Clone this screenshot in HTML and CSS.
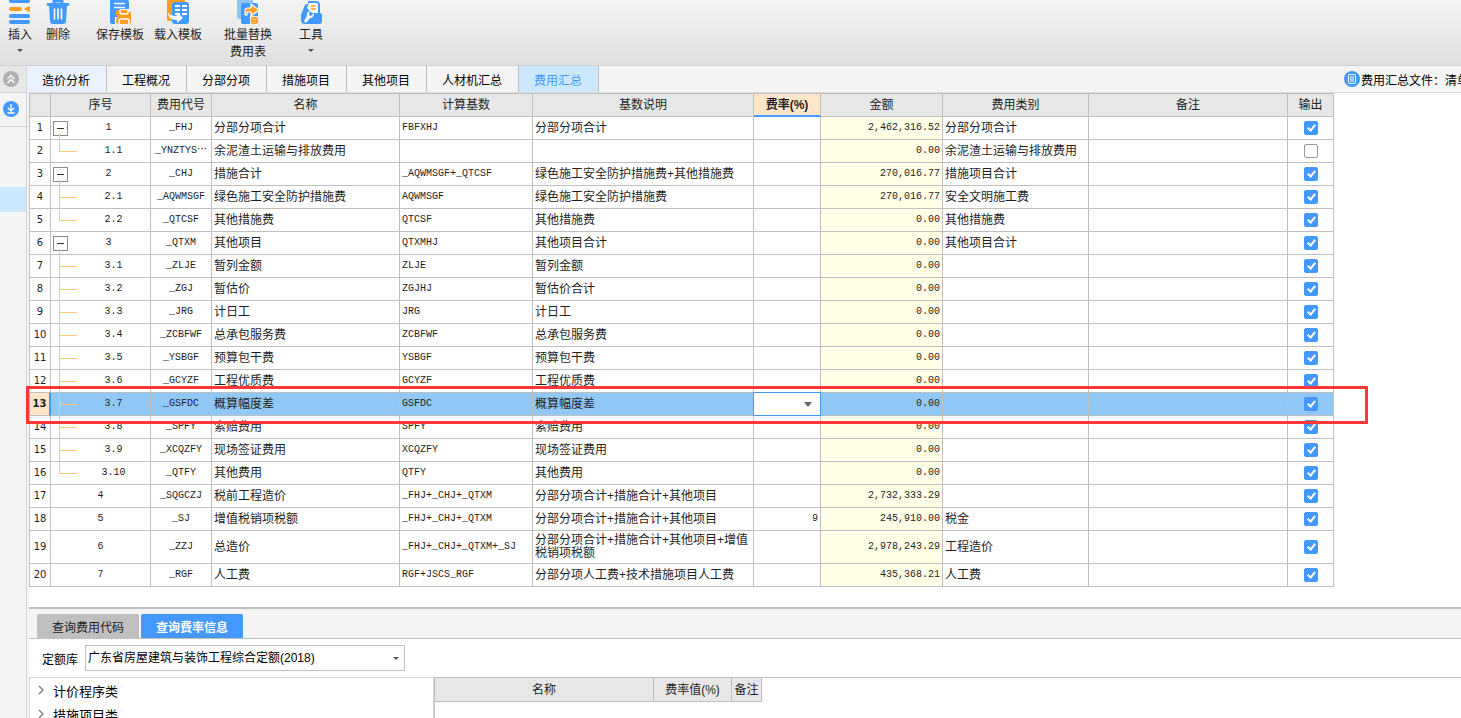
FILE: index.html
```html
<!DOCTYPE html>
<html lang="zh-CN">
<head>
<meta charset="utf-8">
<title>费用汇总</title>
<link rel="stylesheet" href="styles.css">
</head>
<body>
<div class="app">
  <header class="toolbar">
    <button class="tool tool-insert" type="button">
      <svg class="tool-icon" viewBox="0 0 24 24"><g fill="#4399ff"><rect x="1" y="-2" width="21" height="5" rx="2"/><rect x="1" y="14" width="21" height="4" rx="2"/><rect x="1" y="20" width="21" height="4" rx="2"/></g><rect x="1" y="7" width="13" height="4" rx="2" fill="#ff9d1e"/><path d="M16 9l5-3q1 0 1 1v4q0 1-1 1z" fill="#ff9d1e"/></svg>
      <span>插入</span><i class="caret"></i>
    </button>
    <button class="tool tool-delete" type="button">
      <svg class="tool-icon" viewBox="0 0 24 24"><path d="M2 4.500h20M8 4V1h8v3" fill="none" stroke="#4399ff" stroke-width="2.800" stroke-linecap="round"/><path d="M3 5h18l-1 16q0 3-3 3H7q-3 0-3-3z" fill="#4399ff"/><path d="M8.500 8.500v11M12 8.500v11M15.500 8.500v11" stroke="#fff" stroke-width="1.600"/></svg>
      <span>删除</span>
    </button>
    <button class="tool tool-save" type="button">
      <svg class="tool-icon" viewBox="0 0 24 24"><path d="M4-1h13q4 0 4 4v6h-8q-2 0-2 2v6H7v7H4q-2 0-2-2V1q0-2 2-2z" fill="#4399ff"/><path d="M6 3.500h11M6 7.500h11" stroke="#fff" stroke-width="1.500"/><path d="M7 18h3v6H7z" fill="#fff"/><path d="M10 10h10l3 3v9q0 2-2 2H10q-2 0-2-2v-3l2-2-2-2v-3q0-2 2-2z" fill="#ff9d1e"/><path d="M12 10v2q0 2 2 2h4q2 0 2-2v-2M11 24v-3q0-2 2-2h6q2 0 2 2v3" fill="none" stroke="#fff" stroke-width="1.500"/></svg>
      <span>保存模板</span>
    </button>
    <button class="tool tool-load" type="button">
      <svg class="tool-icon" viewBox="0 0 24 24"><rect x="1" y="-1" width="18" height="22" rx="2" fill="#ff9d1e"/><rect x="6" y="2" width="17" height="22" rx="3" fill="#4399ff"/><path d="M9 6h5M9 10h5M9 14h5M16 6h5M16 10h5M16 14h5" stroke="#fff" stroke-width="2"/><path d="M2 12q1 4 9 4v-4l6 6-6 5v-3Q2 20 2 12z" fill="#fff"/></svg>
      <span>载入模板</span>
    </button>
    <button class="tool tool-replace" type="button">
      <svg class="tool-icon" viewBox="0 0 24 24"><rect x="1" y="-1" width="16" height="20" rx="2" fill="#8fc4fc"/><path d="M7 3h13q2 0 2 2v17H15v2H7q-2 0-2-2V5q0-2 2-2z" fill="#4399ff"/><path d="M9 15V11q0-3 3-3h3V4l8 6-8 6v-4h-4v3z" fill="#ff9d1e" stroke="#fff" stroke-width="1.200"/><rect x="14" y="16" width="10" height="9" fill="#ececec"/><rect x="15" y="17" width="7" height="7" rx="2" fill="#ff9d1e"/><path d="M16.500 19.500h4M16.500 22h4" stroke="#ffd28f"/></svg>
      <span>批量替换</span><span>费用表</span>
    </button>
    <button class="tool tool-tools" type="button">
      <svg class="tool-icon" viewBox="0 0 24 24"><path d="M9 1h8q4 0 4 4v8q2 0 2 2v6q0 3-3 3H6q-4 0-4-4v-5l3-8q1-3 4-3z" fill="#4399ff"/><path d="M10 3h7q2 0 2 2v8h-6L8 8z" fill="#fff"/><path d="M12 6h5M12 9h5" stroke="#ff9d1e" stroke-width="1.500"/><path d="M5 21l3-5q-1-4 3-5l-1 4 2 1 3-3q0 5-4 5l-4 5z" fill="#fff"/></svg>
      <span>工具</span><i class="caret"></i>
    </button>
  </header>

  <div class="workspace">
    <aside class="sidebar">
      <button class="side-toggle" type="button" aria-label="收起"><svg viewBox="0 0 16 16"><circle cx="8" cy="8" r="8" fill="#b0b0b0"/><path d="M4.500 8L8 4.500 11.500 8M4.500 12L8 8.500l3.500 3.500" fill="none" stroke="#fff" stroke-width="1.300"/></svg></button>
      <button class="side-download" type="button" aria-label="下载"><svg viewBox="0 0 16 16"><circle cx="8" cy="8" r="8" fill="#4399ff"/><path d="M8 3v7M5 7l3 3 3-3M4.500 12h7" fill="none" stroke="#fff" stroke-width="1.300"/></svg></button>
      <div class="side-current"></div>
    </aside>

    <main class="content">
      <nav class="tabs">
        <button class="tab tab-hover" type="button">造价分析</button>
        <button class="tab" type="button">工程概况</button>
        <button class="tab" type="button">分部分项</button>
        <button class="tab" type="button">措施项目</button>
        <button class="tab" type="button">其他项目</button>
        <button class="tab" type="button">人材机汇总</button>
        <button class="tab tab-active" type="button">费用汇总</button>
        <div class="file-info"><svg viewBox="0 0 16 16"><circle cx="8" cy="8" r="8" fill="#4399ff"/><rect x="4.500" y="3.500" width="7" height="9" rx="1" fill="none" stroke="#fff"/><path d="M6 6h4M6 8h4M6 10h4" stroke="#fff"/></svg><span>费用汇总文件：清单</span></div>
      </nav>

      <section class="grid-area">
        <table class="grid">
          <colgroup><col class="c-row"><col class="c-seq"><col class="c-code"><col class="c-name"><col class="c-base"><col class="c-desc"><col class="c-rate"><col class="c-sum"><col class="c-kind"><col class="c-note"><col class="c-out"></colgroup>
          <thead><tr><th></th><th>序号</th><th>费用代号</th><th>名称</th><th>计算基数</th><th>基数说明</th><th class="th-current">费率(%)</th><th>金额</th><th>费用类别</th><th>备注</th><th>输出</th></tr></thead>
          <tbody>
            <tr><td class="num">1</td><td class="seq root">1</td><td class="code">_FHJ</td><td>分部分项合计</td><td class="mono">FBFXHJ</td><td>分部分项合计</td><td class="rate"></td><td class="sum">2,462,316.52</td><td>分部分项合计</td><td></td><td class="out"><input type="checkbox" aria-label="输出 1" checked></td></tr>
            <tr><td class="num">2</td><td class="seq leaf last">1.1</td><td class="code">_YNZTYS⋯</td><td>余泥渣土运输与排放费用</td><td class="mono"></td><td></td><td class="rate"></td><td class="sum">0.00</td><td>余泥渣土运输与排放费用</td><td></td><td class="out"><input type="checkbox" aria-label="输出 2"></td></tr>
            <tr><td class="num">3</td><td class="seq root">2</td><td class="code">_CHJ</td><td>措施合计</td><td class="mono">_AQWMSGF+_QTCSF</td><td>绿色施工安全防护措施费+其他措施费</td><td class="rate"></td><td class="sum">270,016.77</td><td>措施项目合计</td><td></td><td class="out"><input type="checkbox" aria-label="输出 3" checked></td></tr>
            <tr><td class="num">4</td><td class="seq leaf">2.1</td><td class="code">_AQWMSGF</td><td>绿色施工安全防护措施费</td><td class="mono">AQWMSGF</td><td>绿色施工安全防护措施费</td><td class="rate"></td><td class="sum">270,016.77</td><td>安全文明施工费</td><td></td><td class="out"><input type="checkbox" aria-label="输出 4" checked></td></tr>
            <tr><td class="num">5</td><td class="seq leaf last">2.2</td><td class="code">_QTCSF</td><td>其他措施费</td><td class="mono">QTCSF</td><td>其他措施费</td><td class="rate"></td><td class="sum">0.00</td><td>其他措施费</td><td></td><td class="out"><input type="checkbox" aria-label="输出 5" checked></td></tr>
            <tr><td class="num">6</td><td class="seq root">3</td><td class="code">_QTXM</td><td>其他项目</td><td class="mono">QTXMHJ</td><td>其他项目合计</td><td class="rate"></td><td class="sum">0.00</td><td>其他项目合计</td><td></td><td class="out"><input type="checkbox" aria-label="输出 6" checked></td></tr>
            <tr><td class="num">7</td><td class="seq leaf">3.1</td><td class="code">_ZLJE</td><td>暂列金额</td><td class="mono">ZLJE</td><td>暂列金额</td><td class="rate"></td><td class="sum">0.00</td><td></td><td></td><td class="out"><input type="checkbox" aria-label="输出 7" checked></td></tr>
            <tr><td class="num">8</td><td class="seq leaf">3.2</td><td class="code">_ZGJ</td><td>暂估价</td><td class="mono">ZGJHJ</td><td>暂估价合计</td><td class="rate"></td><td class="sum">0.00</td><td></td><td></td><td class="out"><input type="checkbox" aria-label="输出 8" checked></td></tr>
            <tr><td class="num">9</td><td class="seq leaf">3.3</td><td class="code">_JRG</td><td>计日工</td><td class="mono">JRG</td><td>计日工</td><td class="rate"></td><td class="sum">0.00</td><td></td><td></td><td class="out"><input type="checkbox" aria-label="输出 9" checked></td></tr>
            <tr><td class="num">10</td><td class="seq leaf">3.4</td><td class="code">_ZCBFWF</td><td>总承包服务费</td><td class="mono">ZCBFWF</td><td>总承包服务费</td><td class="rate"></td><td class="sum">0.00</td><td></td><td></td><td class="out"><input type="checkbox" aria-label="输出 10" checked></td></tr>
            <tr><td class="num">11</td><td class="seq leaf">3.5</td><td class="code">_YSBGF</td><td>预算包干费</td><td class="mono">YSBGF</td><td>预算包干费</td><td class="rate"></td><td class="sum">0.00</td><td></td><td></td><td class="out"><input type="checkbox" aria-label="输出 11" checked></td></tr>
            <tr><td class="num">12</td><td class="seq leaf">3.6</td><td class="code">_GCYZF</td><td>工程优质费</td><td class="mono">GCYZF</td><td>工程优质费</td><td class="rate"></td><td class="sum">0.00</td><td></td><td></td><td class="out"><input type="checkbox" aria-label="输出 12" checked></td></tr>
            <tr class="selected"><td class="num">13</td><td class="seq leaf">3.7</td><td class="code">_GSFDC</td><td>概算幅度差</td><td class="mono">GSFDC</td><td>概算幅度差</td><td class="rate editing"><select aria-label="费率"><option></option></select></td><td class="sum">0.00</td><td></td><td></td><td class="out"><input type="checkbox" aria-label="输出 13" checked></td></tr>
            <tr><td class="num">14</td><td class="seq leaf">3.8</td><td class="code">_SPFY</td><td>索赔费用</td><td class="mono">SPFY</td><td>索赔费用</td><td class="rate"></td><td class="sum">0.00</td><td></td><td></td><td class="out"><input type="checkbox" aria-label="输出 14" checked></td></tr>
            <tr><td class="num">15</td><td class="seq leaf">3.9</td><td class="code">_XCQZFY</td><td>现场签证费用</td><td class="mono">XCQZFY</td><td>现场签证费用</td><td class="rate"></td><td class="sum">0.00</td><td></td><td></td><td class="out"><input type="checkbox" aria-label="输出 15" checked></td></tr>
            <tr><td class="num">16</td><td class="seq leaf last">3.10</td><td class="code">_QTFY</td><td>其他费用</td><td class="mono">QTFY</td><td>其他费用</td><td class="rate"></td><td class="sum">0.00</td><td></td><td></td><td class="out"><input type="checkbox" aria-label="输出 16" checked></td></tr>
            <tr><td class="num">17</td><td class="seq">4</td><td class="code">_SQGCZJ</td><td>税前工程造价</td><td class="mono">_FHJ+_CHJ+_QTXM</td><td>分部分项合计+措施合计+其他项目</td><td class="rate"></td><td class="sum">2,732,333.29</td><td></td><td></td><td class="out"><input type="checkbox" aria-label="输出 17" checked></td></tr>
            <tr><td class="num">18</td><td class="seq">5</td><td class="code">_SJ</td><td>增值税销项税额</td><td class="mono">_FHJ+_CHJ+_QTXM</td><td>分部分项合计+措施合计+其他项目</td><td class="rate">9</td><td class="sum">245,910.00</td><td>税金</td><td></td><td class="out"><input type="checkbox" aria-label="输出 18" checked></td></tr>
            <tr class="tall"><td class="num">19</td><td class="seq">6</td><td class="code">_ZZJ</td><td>总造价</td><td class="mono">_FHJ+_CHJ+_QTXM+_SJ</td><td class="wrap">分部分项合计+措施合计+其他项目+增值税销项税额</td><td class="rate"></td><td class="sum">2,978,243.29</td><td>工程造价</td><td></td><td class="out"><input type="checkbox" aria-label="输出 19" checked></td></tr>
            <tr><td class="num">20</td><td class="seq">7</td><td class="code">_RGF</td><td>人工费</td><td class="mono">RGF+JSCS_RGF</td><td>分部分项人工费+技术措施项目人工费</td><td class="rate"></td><td class="sum">435,368.21</td><td>人工费</td><td></td><td class="out"><input type="checkbox" aria-label="输出 20" checked></td></tr>
          </tbody>
        </table>
        <div class="row-marker"></div>
      </section>

      <section class="query">
        <div class="query-tabs">
          <button class="query-tab" type="button">查询费用代码</button>
          <button class="query-tab query-tab-active" type="button">查询费率信息</button>
        </div>
        <div class="query-filter">
          <label for="library">定额库</label>
          <div class="library"><select id="library"><option>广东省房屋建筑与装饰工程综合定额(2018)</option></select></div>
        </div>
        <div class="query-body">
          <ul class="tree">
            <li><svg viewBox="0 0 6 10"><path d="M1 1l4 4-4 4" fill="none" stroke="#777" stroke-width="1.300"/></svg>计价程序类</li>
            <li><svg viewBox="0 0 6 10"><path d="M1 1l4 4-4 4" fill="none" stroke="#777" stroke-width="1.300"/></svg>措施项目类</li>
          </ul>
          <div class="rates">
            <table class="grid rates-grid">
              <colgroup><col class="r-name"><col class="r-value"><col class="r-note"></colgroup>
              <thead><tr><th>名称</th><th>费率值(%)</th><th>备注</th></tr></thead>
            </table>
          </div>
        </div>
      </section>
    </main>
  </div>
</div>
</body>
</html>
```
FILE: styles.css
```css
* { box-sizing: border-box; }

body {
  margin: 0;
  font-family: "Liberation Sans", "Noto Sans CJK SC", sans-serif;
  font-size: 12px;
  color: #1e1e1e;
}

button {
  margin: 0;
  padding: 0;
  border: 0;
  background: none;
  font: inherit;
  color: inherit;
  white-space: nowrap;
}

svg { display: block; flex: none; }

.app {
  display: flex;
  flex-direction: column;
  height: 100vh;
  overflow: hidden;
  background: #f4f4f4;
}

/* Toolbar */
.toolbar {
  display: flex;
  align-items: flex-start;
  flex: none;
  height: 66px;
  padding-left: 8px;
  border-bottom: 1px solid #d0d0d0;
  background: linear-gradient(#f4f4f4, #dfdfdf);
}

.tool {
  display: flex;
  flex-direction: column;
  align-items: center;
  line-height: 17px;
}

.tool-icon { width: 24px; height: 24px; margin-bottom: 3px; }
.tool-delete { margin-left: 14px; }
.tool-save { margin-left: 26px; }
.tool-load { margin-left: 10px; }
.tool-replace { margin-left: 22px; }
.tool-tools { margin-left: 27px; }

.caret {
  margin-top: 5px;
  border: 3px solid transparent;
  border-top-color: #555;
  border-bottom: 0;
}

/* Sidebar */
.workspace { display: flex; flex: 1; min-height: 0; }

.sidebar {
  flex: none;
  width: 27px;
  border-right: 1px solid #d4d4d4;
}

.sidebar svg { width: 16px; height: 16px; }

.side-toggle, .side-download {
  display: flex;
  align-items: center;
  width: 100%;
  padding-left: 3px;
  border-bottom: 1px solid #d4d4d4;
}

.side-toggle { height: 27px; background: #e7e7e7; }
.side-download { height: 34px; padding-bottom: 2px; }
.side-current { height: 25px; margin-top: 60px; background: #cce8ff; }

.content {
  display: flex;
  flex-direction: column;
  flex: 1;
  min-width: 0;
}

/* Tabs */
.tabs {
  display: flex;
  flex: none;
  height: 27px;
  border-bottom: 1px solid #dcdcdc;
}

.tab {
  padding: 0 16px 0 15px;
  border-right: 1px solid #bfbfbf;
  color: #000;
}

.tab-hover { background: #eaf2ff; }
.tab-active { background: #cce8ff; color: #4399ff; }

.file-info {
  display: flex;
  align-items: center;
  gap: 1px;
  width: 117px;
  margin-left: auto;
  white-space: nowrap;
  color: #000;
}

.file-info svg { width: 16px; height: 16px; }

/* Data grid */
.grid-area {
  position: relative;
  flex: none;
  margin-left: 2px;
  padding-bottom: 20px;
  border-bottom: 2px solid #bfbfbf;
  background: #fff;
}

.grid {
  width: 1305px;
  table-layout: fixed;
  border-spacing: 0;
  border-top: 1px solid #bfbfbf;
  border-left: 1px solid #bfbfbf;
}

.c-row { width: 21px; }
.c-seq { width: 100px; }
.c-code { width: 61px; }
.c-name { width: 188px; }
.c-base { width: 133px; }
.c-desc { width: 221px; }
.c-rate { width: 67px; }
.c-sum { width: 122px; }
.c-kind { width: 146px; }
.c-note { width: 199px; }
.c-out { width: 46px; }

.grid th, .grid td {
  height: 23px;
  padding: 0 2px;
  border-right: 1px solid #bfbfbf;
  border-bottom: 1px solid #bfbfbf;
  line-height: 14px;
  white-space: nowrap;
}

.grid td { padding-bottom: 1px; }

.grid th {
  padding: 0;
  background: #e7e7e7;
  font-weight: 400;
}

.grid .th-current {
  border-bottom: 2px solid #4399ff;
  background: #ffe6c8;
  font-weight: 700;
}

.grid .mono, .grid .code, .grid .seq, .grid .sum, .grid .rate {
  font-family: "Liberation Mono", "Noto Sans CJK SC", monospace;
  font-size: 10px;
}

.grid .num {
  padding: 0;
  font-family: "DejaVu Sans", sans-serif;
  font-size: 10px;
  text-align: center;
}

.grid .code { padding: 0; text-align: center; }
.grid .sum { background: #ffffe8; text-align: right; }
.grid .rate { text-align: right; }
.grid .tall td { height: 33px; }
.grid .wrap { white-space: normal; line-height: 13px; }

/* Tree column */
.seq { position: relative; text-align: center; }
.grid .root { padding-left: 18px; }
.grid .leaf { padding-left: 28px; }

.root::before {
  content: "";
  position: absolute;
  left: 2px;
  top: 4px;
  width: 13px;
  height: 13px;
  border: 1px solid #888;
  background: linear-gradient(#333, #333) center / 7px 1px no-repeat #fff;
}

.root::after {
  content: "";
  position: absolute;
  left: 8px;
  top: 17px;
  bottom: -1px;
  width: 1px;
  background: #ffc878;
}

.leaf::before {
  content: "";
  position: absolute;
  left: 8px;
  top: 0;
  width: 17px;
  height: 11px;
  border-left: 1px solid #ffc878;
  border-bottom: 1px solid #ffc878;
}

.leaf:not(.last)::after {
  content: "";
  position: absolute;
  left: 8px;
  top: 11px;
  bottom: -1px;
  width: 1px;
  background: #ffc878;
}

/* Output tick boxes */
.grid .out { padding: 0; text-align: center; }

.out input {
  appearance: none;
  display: block;
  position: relative;
  width: 14px;
  height: 14px;
  margin: 0 auto;
  border: 1px solid #999;
  border-radius: 2px;
  background: #fff;
}

.out input:checked { border-color: #4399ff; background: #4399ff; }

.out input:checked::after {
  content: "";
  position: absolute;
  left: 4px;
  top: 1px;
  width: 4px;
  height: 8px;
  box-sizing: content-box;
  width: 3px;
  height: 6px;
  border: solid #fff;
  border-width: 0 2px 2px 0;
  transform: rotate(40deg);
}

/* Selected row */
.grid .selected td { background: #92c8f8; }

.grid .selected .num {
  border-right: 2px solid #4399ff;
  background: #ffe6c8;
  font-weight: 700;
}

.grid .editing { position: relative; }

.editing select {
  appearance: none;
  position: absolute;
  inset: -1px;
  width: calc(100% + 2px);
  border: 1px solid #4399ff;
  border-radius: 0;
  background: #fff;
}

.editing::after {
  content: "";
  position: absolute;
  right: 8px;
  top: 9px;
  border: 4px solid transparent;
  border-top: 5px solid #666;
  border-bottom: 0;
}

.row-marker {
  position: absolute;
  z-index: 1;
  left: -3px;
  top: 293px;
  width: 1342px;
  height: 38px;
  border: 3px solid #ff3638;
  pointer-events: none;
}

/* Query panel */
.query {
  display: flex;
  flex-direction: column;
  flex: 1;
  min-height: 0;
  margin-left: 2px;
}

.query-tabs {
  display: flex;
  gap: 2px;
  flex: none;
  padding: 5px 0 0 8px;
  border-bottom: 1px solid #bfbfbf;
}

.query-tab {
  width: 102px;
  height: 24px;
  border-radius: 2px 2px 0 0;
  background: #bfbfbf;
}

.query-tab-active { background: #4399ff; color: #fff; font-weight: 700; }

.query-filter {
  display: flex;
  align-items: center;
  gap: 7px;
  flex: none;
  height: 38px;
  padding-left: 13px;
  background: #fff;
  color: #000;
}

.library { position: relative; width: 320px; }

.library select {
  appearance: none;
  display: block;
  width: 100%;
  height: 26px;
  padding: 0 2px;
  border: 1px solid #bfbfbf;
  border-radius: 0;
  background: #fff;
  font: inherit;
  color: #000;
}

.library::after {
  content: "";
  position: absolute;
  right: 6px;
  top: 12px;
  border: 3px solid transparent;
  border-top-color: #555;
  border-bottom: 0;
}

.query-body { display: flex; flex: 1; min-height: 0; background: #fff; }

.tree {
  flex: none;
  width: 405px;
  margin: 0;
  padding: 0;
  border: 1px solid #d4d4d4;
  border-bottom: 0;
  list-style: none;
  font-size: 13px;
  color: #000;
}

.tree li {
  display: flex;
  align-items: center;
  gap: 9px;
  height: 24px;
  padding-left: 8px;
}

.tree svg { width: 6px; height: 10px; }

.rates { flex: 1; border-top: 1px solid #bfbfbf; border-left: 1px solid #bfbfbf; }
.rates-grid { width: 327px; border: 0; }
.rates-grid th { height: 24px; }
.r-name { width: 219px; }
.r-value { width: 78px; }
.r-note { width: 30px; }
```
